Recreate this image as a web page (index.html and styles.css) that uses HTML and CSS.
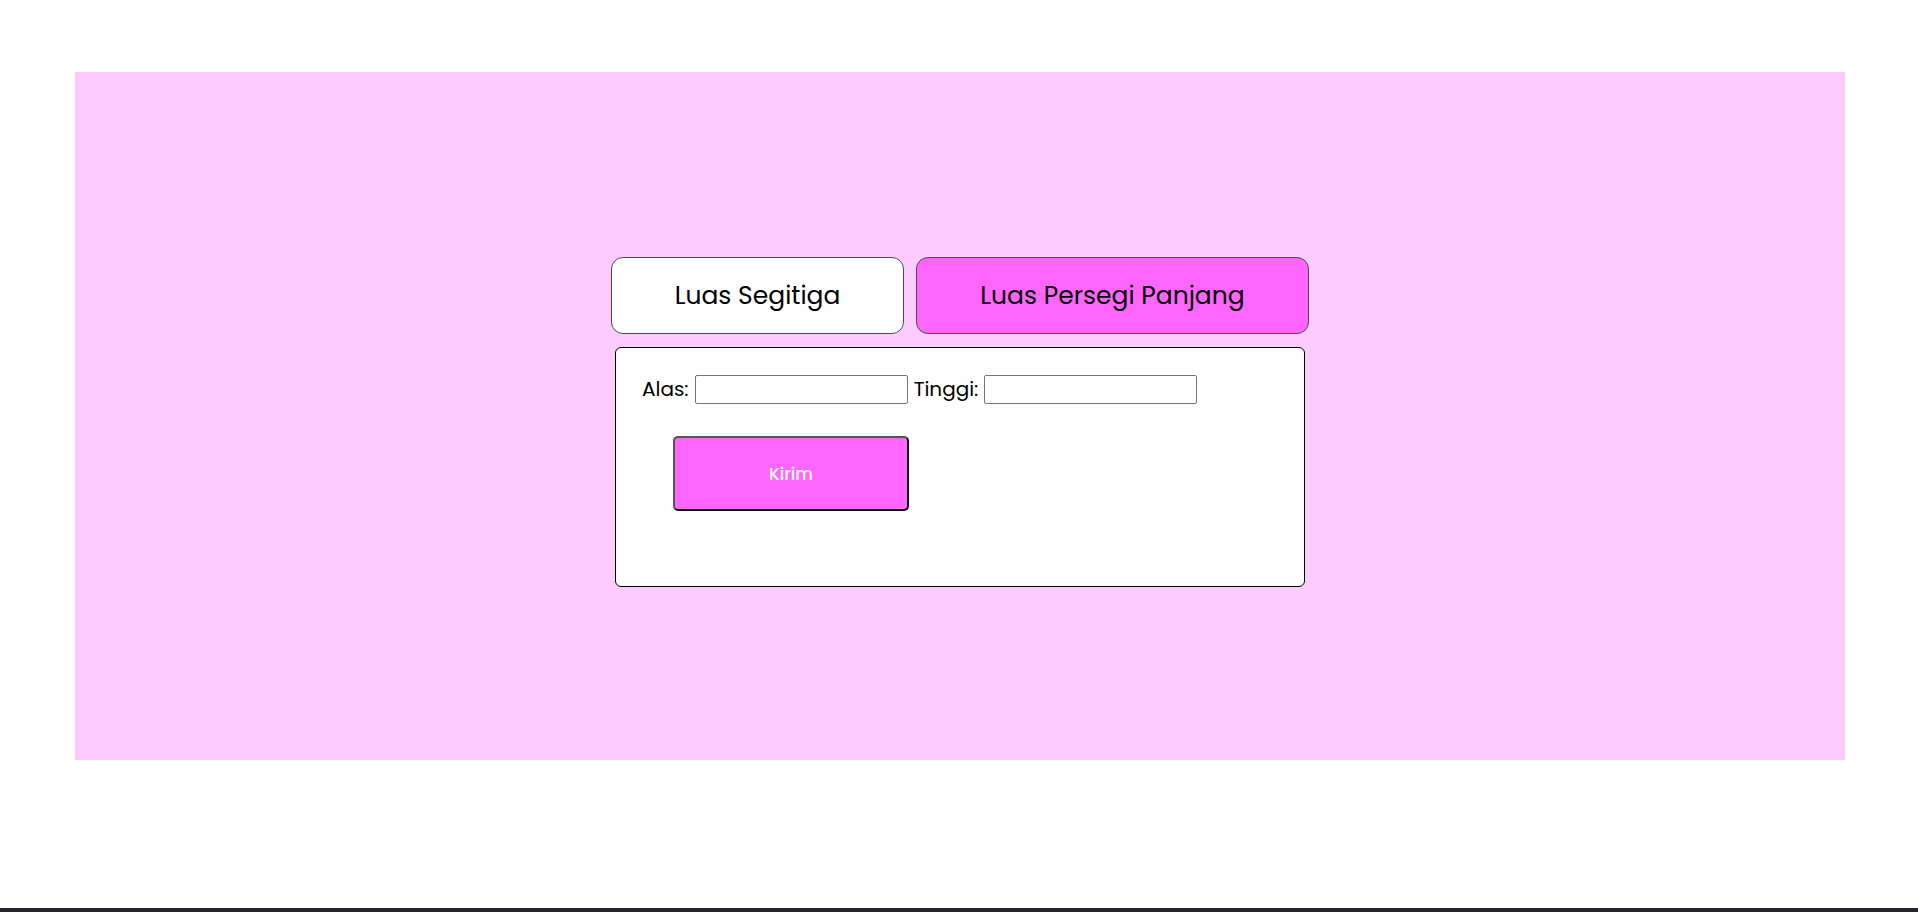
FILE: index.html
```html
<!DOCTYPE html>
<html lang="id">
<head>
<meta charset="utf-8">
<title>Luas Bangun Datar</title>
<link rel="stylesheet" href="styles.css">
</head>
<body>
<div class="page">
  <main class="stage">
    <div class="tabs">
      <button class="tab tab-segitiga" type="button">Luas Segitiga</button>
      <button class="tab tab-persegi active" type="button">Luas Persegi Panjang</button>
    </div>
    <section class="panel">
      <form class="form">
        <div class="fields">
          <label class="label" for="alas">Alas:</label>
          <input class="input" id="alas" type="text">
          <label class="label" for="tinggi">Tinggi:</label>
          <input class="input" id="tinggi" type="text">
        </div>
        <button class="submit" type="button">Kirim</button>
      </form>
    </section>
  </main>
  <div class="taskbar"></div>
</div>
</body>
</html>
```

FILE: styles.css
```css
html, body {
  margin: 0;
  padding: 0;
  background: #fff;
}

body {
  font-family: Poppins, "Inter", "Open Sans", sans-serif;
  color: #000;
}

.page {
  height: 912px;
  display: flex;
  flex-direction: column;
}

.stage {
  margin: 72px 73px 0 75px;
  height: 688px;
  box-sizing: border-box;
  background: #fdcbfd;
  display: flex;
  flex-direction: column;
  align-items: center;
  padding-top: 185px;
}

.tabs {
  display: flex;
  gap: 12px;
}

.tab {
  box-sizing: border-box;
  height: 77px;
  border: 1px solid #4a4a4a;
  border-radius: 12px;
  background: #fff;
  font-family: inherit;
  font-size: 25px;
  color: #000;
  padding: 0;
}

.tab-segitiga { width: 293px; }
.tab-persegi { width: 393px; }

.tab.active {
  background: #fe66fe;
}

.panel {
  box-sizing: border-box;
  width: 690px;
  height: 240px;
  margin-top: 13px;
  background: #fff;
  border: 1px solid #000;
  border-radius: 6px;
  padding: 27px 26px;
}

.fields {
  display: flex;
  align-items: center;
  gap: 6px;
  font-size: 20px;
}

.label {
  line-height: 29px;
}

.input {
  box-sizing: border-box;
  width: 213px;
  height: 29px;
  border: 1px solid #767676;
  border-radius: 2px;
  margin: 0;
  padding: 0 4px;
  background: #fff;
}

.submit {
  display: block;
  box-sizing: border-box;
  width: 236px;
  height: 75px;
  margin: 32px 0 0 31px;
  border: 2px solid;
  border-color: #555 #000 #000 #555;
  border-radius: 5px;
  background: #ff66ff;
  color: #fff;
  font-family: inherit;
  font-size: 17px;
  font-weight: 500;
}

.taskbar {
  margin-top: auto;
  height: 4px;
  background: #25242c;
}
```
